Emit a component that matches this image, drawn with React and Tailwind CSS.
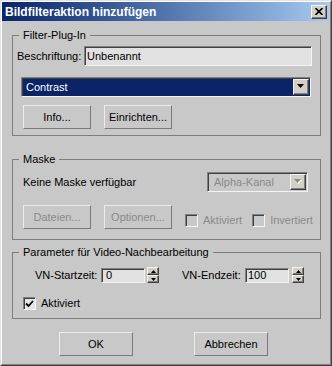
import React from 'react';

// Windows-classic style dialog: "Bildfilteraktion hinzufügen"

const face = 'bg-[#c8c8c8]';

function Raised({ className = '', children }) {
  return (
    <div
      className={`flex items-center justify-center shrink-0 bg-[#d4d0c8] border border-t-[#f4f4f4] border-l-[#f4f4f4] border-r-[#404040] border-b-[#404040] shadow-[inset_-1px_-1px_0_#808080] ${className}`}
    >
      {children}
    </div>
  );
}

function Btn({ children, disabled, className = '' }) {
  return (
    <div
      className={`flex items-center justify-center shrink-0 h-[24px] border border-t-[#ececec] border-l-[#ececec] border-r-[#7a7a7a] border-b-[#7a7a7a] ${
        disabled ? 'text-[#8a8a8a]' : 'text-black'
      } ${className}`}
    >
      {children}
    </div>
  );
}

function Sunken({ className = '', children }) {
  return (
    <div
      className={`shrink-0 border border-t-[#808080] border-l-[#808080] border-r-[#f4f4f4] border-b-[#f4f4f4] shadow-[inset_1px_1px_0_#404040] ${className}`}
    >
      {children}
    </div>
  );
}

function Arrow({ disabled }) {
  return (
    <svg width="8" height="6" viewBox="0 0 8 6" className="block">
      {disabled && <polygon points="1,1 8,1 4.5,5" fill="#fff" />}
      <polygon points="0,0 7,0 3.5,4" fill={disabled ? '#8a8a8a' : '#000'} />
    </svg>
  );
}

function Checkbox({ checked, disabled, label }) {
  return (
    <div className="flex items-center shrink-0">
      <Sunken
        className={`w-[13px] h-[13px] flex items-center justify-center ${
          disabled ? 'bg-[#c8c8c8]' : 'bg-[#e6e6e6]'
        }`}
      >
        {checked && (
          <svg width="9" height="8" viewBox="0 0 9 8">
            <path d="M1 3.5 L3.5 6 L8 1" stroke="#000" strokeWidth="1.8" fill="none" />
          </svg>
        )}
      </Sunken>
      <span className={`ml-[5px] whitespace-nowrap ${disabled ? 'text-[#8a8a8a]' : 'text-black'}`}>
        {label}
      </span>
    </div>
  );
}

function GroupBox({ title, className = '', children }) {
  return (
    <div className={`relative border border-[#7e7e7e] ${className}`}>
      <span className={`absolute left-[6px] top-[-8px] px-[4px] leading-[14px] ${face}`}>
        {title}
      </span>
      {children}
    </div>
  );
}

function Spinner({ className = '' }) {
  return (
    <div className={`flex flex-col shrink-0 ${className}`}>
      <Raised className="h-[8px] w-full">
        <svg width="5" height="3" viewBox="0 0 5 3">
          <polygon points="0,3 5,3 2.5,0" fill="#000" />
        </svg>
      </Raised>
      <Raised className="h-[8px] w-full">
        <svg width="5" height="3" viewBox="0 0 5 3">
          <polygon points="0,0 5,0 2.5,3" fill="#000" />
        </svg>
      </Raised>
    </div>
  );
}

export default function App() {
  return (
    <div className="w-[332px] h-[366px] font-['Liberation_Sans',Arial,sans-serif] text-[11px] leading-[13px] text-black border border-t-[#e2e2e2] border-l-[#e2e2e2] border-r-[#404040] border-b-[#404040]">
      <div className={`h-full flex flex-col border border-t-white border-l-white border-r-[#808080] border-b-[#808080] pr-[1px] ${face}`}>
        {/* Title bar */}
        <div className="h-[19px] flex items-center justify-between bg-gradient-to-r from-[#0a246a] to-[#a6caf0] pl-[3px] pr-[2px]">
          <span className="text-white font-bold text-[12px] leading-[14px]">Bildfilteraktion hinzufügen</span>
          <Raised className="w-[16px] h-[14px]">
            <svg width="8" height="7" viewBox="0 0 8 7">
              <path d="M0.5 0 L7.5 7 M7.5 0 L0.5 7" stroke="#000" strokeWidth="1.6" />
            </svg>
          </Raised>
        </div>

        {/* Body */}
        <div className="flex-1 pl-[10px] pr-[8px]">
          {/* Filter-Plug-In */}
          <GroupBox title="Filter-Plug-In" className="mt-[14px] h-[101px] pt-[10px] pl-[4px] pr-[8px]">
            <div className="flex items-center h-[20px]">
              <span className="w-[67px] shrink-0">Beschriftung:</span>
              <Sunken className="flex-1 h-[20px] bg-[#e1e1e1] pl-[2px] flex items-center">
                Unbenannt
              </Sunken>
            </div>
            <Sunken className="ml-[4px] mr-[1px] mt-[11px] h-[20px] flex items-center bg-[#0b2468]">
              <span className="flex-1 text-white pl-[4px]">Contrast</span>
              <Raised className="w-[16px] h-[16px] mr-[1px]">
                <Arrow />
              </Raised>
            </Sunken>
            <div className="flex gap-[13px] ml-[6px] mt-[8px]">
              <Btn className="w-[68px]">Info...</Btn>
              <Btn className="w-[68px]">Einrichten...</Btn>
            </div>
          </GroupBox>

          {/* Maske */}
          <GroupBox title="Maske" className="mt-[23px] h-[81px] pt-[12px] pl-[10px] pr-[12px]">
            <div className="flex items-center justify-between h-[20px]">
              <span>Keine Maske verfügbar</span>
              <Sunken className="w-[101px] h-[20px] flex items-center bg-[#c8c8c8]">
                <span className="flex-1 text-[#8a8a8a] pl-[6px]">Alpha-Kanal</span>
                <Raised className="w-[16px] h-[16px] mr-[1px]">
                  <Arrow disabled />
                </Raised>
              </Sunken>
            </div>
            <div className="flex items-center mt-[13px] w-[300px]">
              <Btn disabled className="w-[68px]">Dateien...</Btn>
              <Btn disabled className="w-[68px] ml-[13px]">Optionen...</Btn>
              <div className="flex gap-[10px] ml-[13px] mt-[6px] shrink-0">
                <Checkbox disabled label="Aktiviert" />
                <Checkbox disabled label="Invertiert" />
              </div>
            </div>
          </GroupBox>

          {/* Parameter */}
          <GroupBox title="Parameter für Video-Nachbearbeitung" className="mt-[12px] h-[67px] pt-[14px]">
            <div className="flex items-center ml-[22px] h-[16px]">
              <span className="w-[66px] shrink-0">VN-Startzeit:</span>
              <Sunken className="w-[44px] h-[15px] bg-[#e1e1e1] pl-[4px] flex items-center">0</Sunken>
              <Spinner className="w-[12px] ml-[2px]" />
              <span className="w-[63px] ml-[23px] shrink-0">VN-Endzeit:</span>
              <Sunken className="w-[44px] h-[15px] bg-[#e1e1e1] pl-[2px] flex items-center">100</Sunken>
              <Spinner className="w-[12px] ml-[3px]" />
            </div>
            <div className="ml-[10px] mt-[14px]">
              <Checkbox checked label="Aktiviert" />
            </div>
          </GroupBox>

          {/* Dialog buttons */}
          <div className="flex mt-[13px] ml-[47px] gap-[61px]">
            <Btn className="w-[74px]">OK</Btn>
            <Btn className="w-[74px]">Abbrechen</Btn>
          </div>
        </div>
      </div>
    </div>
  );
}
